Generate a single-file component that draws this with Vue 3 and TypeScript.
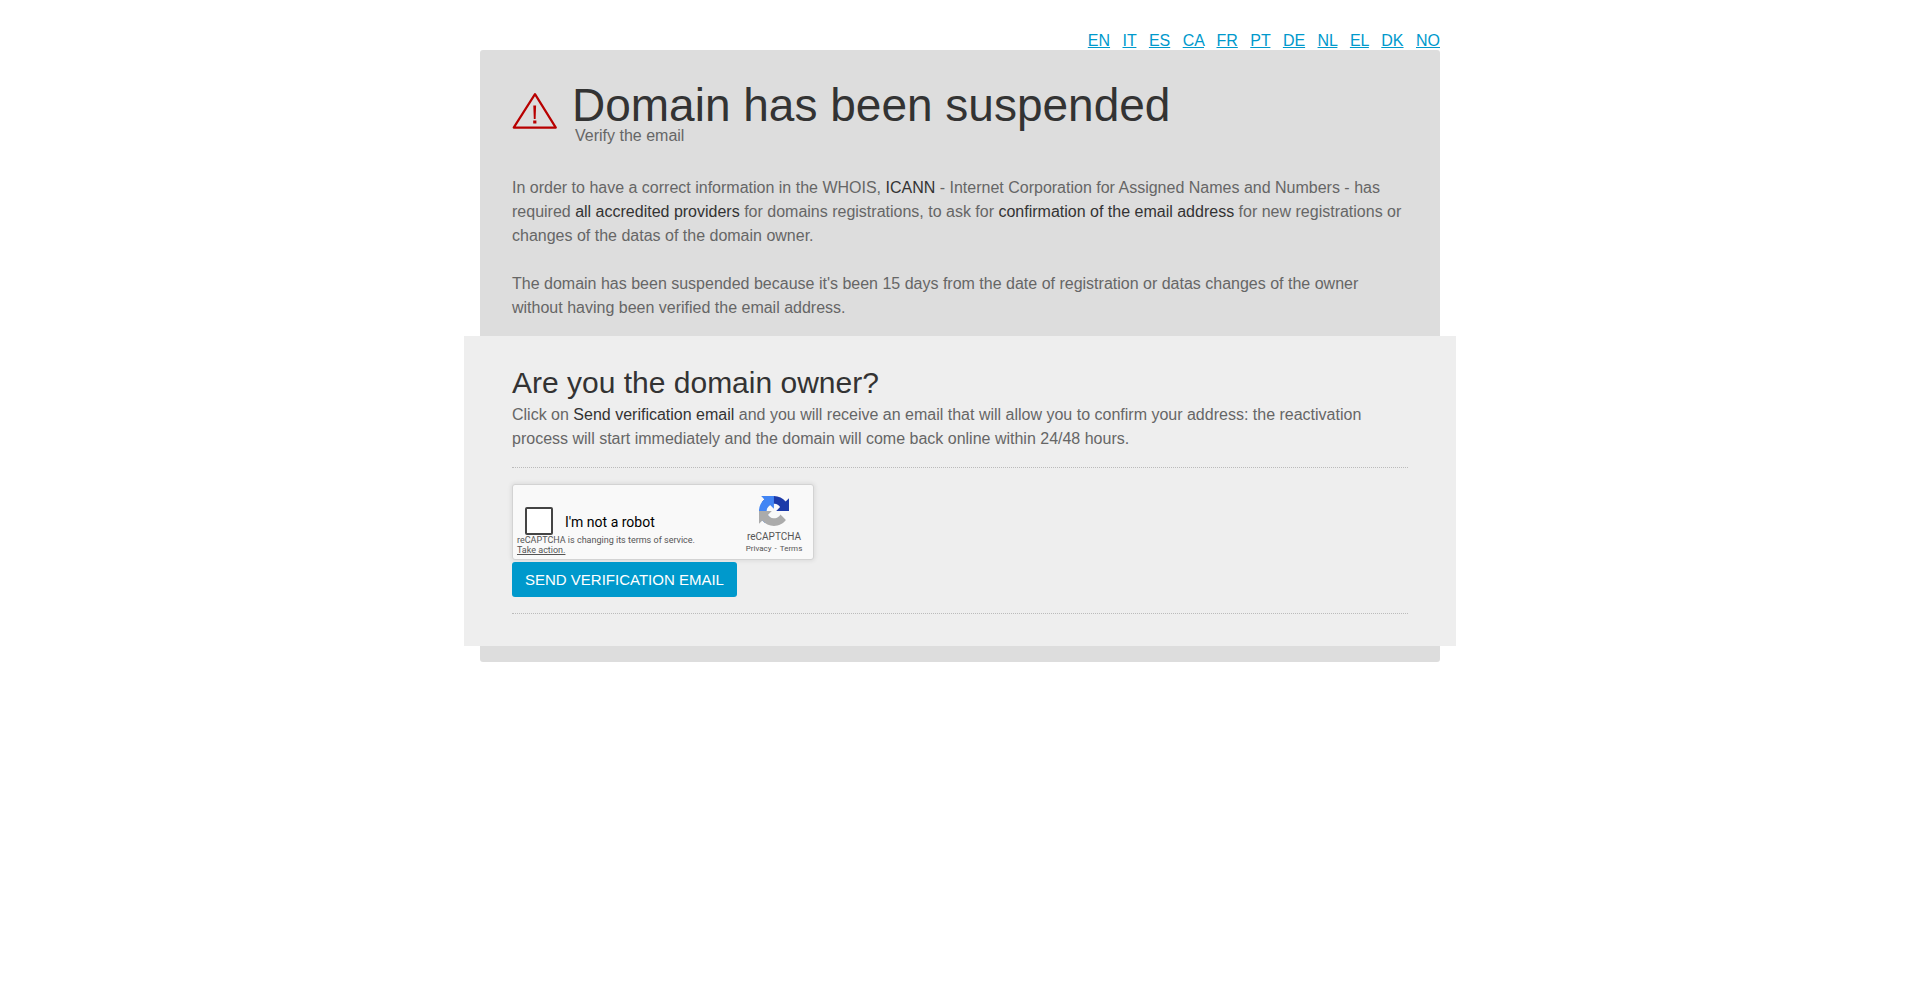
<script setup lang="ts">
import { ref } from 'vue'

const languages: string[] = ['EN', 'IT', 'ES', 'CA', 'FR', 'PT', 'DE', 'NL', 'EL', 'DK', 'NO']
const notRobot = ref<boolean>(false)
</script>

<template>
  <div class="page">
    <nav class="languages" aria-label="Language">
      <template v-for="code in languages" :key="code">{{ ' ' }}<a href="#">{{ code }}</a></template>
    </nav>

    <main class="panel">
      <header class="heading">
        <svg class="warning" viewBox="0 0 46 38" aria-hidden="true">
          <path d="M23 2.2 L43.8 35.6 H1.7 Z" fill="none" stroke="#b80000" stroke-width="2.2" stroke-linejoin="round" />
          <path d="M21.3 13.5 H24.1 L23.6 27 H21.8 Z M21.2 28.6 H24.4 V31.4 H21.2 Z" fill="#b80000" />
        </svg>
        <div>
          <h1>Domain has been suspended</h1>
          <p class="subtitle">Verify the email</p>
        </div>
      </header>

      <p class="text">
        In order to have a correct information in the WHOIS, <strong>ICANN</strong> - Internet
        Corporation for Assigned Names and Numbers - has required
        <strong>all accredited providers</strong> for domains registrations, to ask for
        <strong>confirmation of the email address</strong> for new registrations or changes of the
        datas of the domain owner.
      </p>
      <p class="text">
        The domain has been suspended because it's been 15 days from the date of registration or
        datas changes of the owner without having been verified the email address.
      </p>

      <section class="owner">
        <h2>Are you the domain owner?</h2>
        <p>
          Click on <strong>Send verification email</strong> and you will receive an email that will
          allow you to confirm your address: the reactivation process will start immediately and
          the domain will come back online within 24/48 hours.
        </p>

        <form class="verify" @submit.prevent>
          <div class="captcha">
            <div class="captcha-main">
              <div class="captcha-check">
                <input id="not-robot" v-model="notRobot" type="checkbox" />
                <label for="not-robot">I'm not a robot</label>
              </div>
              <div class="captcha-notice">
                reCAPTCHA is changing its terms of service.<br />
                <a href="#">Take action.</a>
              </div>
            </div>
            <div class="captcha-brand">
              <svg class="captcha-logo" viewBox="0 0 64 64" aria-hidden="true">
                <path fill="#1c3aa9" d="M64 31.955l-.033-1.37V4.687l-7.16 7.16C50.948 4.674 42.033.093 32.05.093c-10.4 0-19.622 4.96-25.458 12.64l11.736 11.86a15.55 15.55 0 0 1 4.754-5.334c2.05-1.6 4.952-2.906 8.968-2.906.485 0 .86.057 1.135.163 4.976.393 9.288 3.14 11.828 7.124l-8.307 8.307L64 31.953" />
                <path fill="#4285f4" d="M31.862.094l-1.37.033H4.594l7.16 7.16C4.58 13.147 0 22.06 0 32.046c0 10.4 4.96 19.622 12.64 25.458L24.5 45.768a15.55 15.55 0 0 1-5.334-4.754c-1.6-2.05-2.906-4.952-2.906-8.968 0-.485.057-.86.163-1.135.393-4.976 3.14-9.288 7.124-11.828l8.307 8.307L31.86.095" />
                <path fill="#ababab" d="M.001 32.045l.033 1.37v25.898l7.16-7.16c5.86 7.173 14.774 11.754 24.76 11.754 10.4 0 19.622-4.96 25.458-12.64l-11.736-11.86a15.55 15.55 0 0 1-4.754 5.334c-2.05 1.6-4.952 2.906-8.968 2.906-.485 0-.86-.057-1.135-.163-4.976-.393-9.288-3.14-11.828-7.124l8.307-8.307c-10.522.04-22.4.066-27.295-.005" />
              </svg>
              <div class="captcha-name">reCAPTCHA</div>
              <div class="captcha-links">
                <a href="#">Privacy</a><span>-</span><a href="#">Terms</a>
              </div>
            </div>
          </div>
          <button type="submit">SEND VERIFICATION EMAIL</button>
        </form>
      </section>
    </main>
  </div>
</template>

<style>
body {
  margin: 0;
  background: #fff;
}
</style>

<style scoped>
.page {
  box-sizing: border-box;
  max-width: 992px;
  margin: 0 auto;
  padding: 32px 16px;
  font: 16px/24px "Liberation Sans", Arial, sans-serif;
  color: #666;
}

h1,
h2,
p {
  margin: 0;
  font-weight: 400;
}

h1,
h2,
strong {
  color: #333;
}

strong {
  font-weight: 400;
}

.languages {
  text-align: right;
  line-height: 18px;
}

.languages a {
  margin-left: 8px;
  color: #0099cc;
}

.panel {
  padding: 32px 32px 16px;
  border-radius: 3px;
  background: #ddd;
}

.heading {
  display: flex;
  gap: 14px;
  margin-bottom: 32px;
}

.warning {
  flex: none;
  width: 46px;
  height: 38px;
  margin-top: 10px;
}

h1 {
  font-size: 46px;
  line-height: 46px;
}

.subtitle {
  padding-left: 3px;
  line-height: 16px;
}

.text + .text {
  margin-top: 24px;
}

.owner {
  margin: 16px -48px 0;
  padding: 32px 48px;
  background: #eee;
}

h2 {
  font-size: 30px;
  line-height: 30px;
  margin-bottom: 5px;
}

.verify {
  margin-top: 16px;
  padding: 16px 0;
  border-top: 1px dotted #bbb;
  border-bottom: 1px dotted #bbb;
}

.captcha {
  display: flex;
  box-sizing: border-box;
  width: 302px;
  height: 76px;
  margin-bottom: 2px;
  border: 1px solid #d3d3d3;
  border-radius: 3px;
  background: #f9f9f9;
  box-shadow: 0 0 4px 1px rgba(0, 0, 0, 0.08);
  font-family: Roboto, sans-serif;
  color: #555;
}

.captcha-main {
  flex: 1;
  padding: 22px 0 0 4px;
}

.captcha-check {
  display: flex;
  align-items: center;
  gap: 12px;
  height: 28px;
  padding-left: 8px;
}

.captcha-check input {
  appearance: none;
  box-sizing: border-box;
  width: 28px;
  height: 28px;
  margin: 0;
  border: 2px solid #444;
  border-radius: 2px;
  background: #fff;
}

.captcha-check label {
  padding-top: 2px;
  font-size: 14px;
  line-height: 18px;
  color: #000;
}

.captcha-notice {
  font-size: 9px;
  line-height: 10px;
}

.captcha a {
  color: inherit;
}

.captcha-brand {
  display: flex;
  flex-direction: column;
  align-items: center;
  width: 78px;
  padding-top: 11px;
}

.captcha-logo {
  width: 30px;
  height: 30px;
}

.captcha-name {
  margin-top: 5px;
  font-size: 10px;
  line-height: 12px;
}

.captcha-links {
  font-size: 8px;
  line-height: 12px;
}

.captcha-links span {
  padding: 0 3px;
}

.captcha-links a {
  text-decoration: none;
}

button {
  display: block;
  padding: 0 13px;
  border: 0;
  border-radius: 3px;
  background: #0099cc;
  color: #fff;
  font: 15px/35px "Liberation Sans", Arial, sans-serif;
  cursor: pointer;
}
</style>
